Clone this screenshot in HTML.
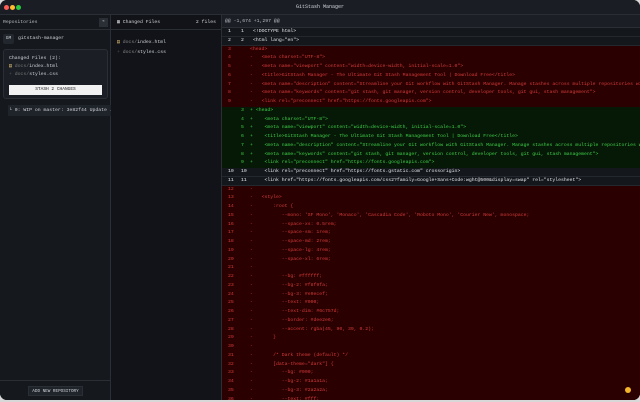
<!DOCTYPE html>
<html><head><meta charset="utf-8"><style>
*{margin:0;padding:0;box-sizing:border-box}
body{width:640px;height:402px;background:#d8d8d8;overflow:hidden;font-family:"Liberation Mono",monospace;}
.win{position:absolute;left:0;top:0;width:640px;height:400px;background:#0f1115;border-radius:7px;overflow:hidden;}
.title{position:absolute;left:0;top:0;width:640px;height:15px;background:#1a1d23;border-bottom:1px solid #2a2e35;color:#cfd3d8;font-size:5px;text-align:center;line-height:15px}
.dot{position:absolute;top:5px;width:5px;height:5px;border-radius:50%}
.side{position:absolute;left:0;top:15px;width:111px;height:385px;background:#15181d;border-right:1px solid #2a2e35;color:#cfd3d8;font-size:4.8px}
.mid{position:absolute;left:111px;top:15px;width:111px;height:385px;background:#111318;border-right:1px solid #2a2e35;color:#cfd3d8;font-size:4.8px}
.diff{position:absolute;left:222px;top:15px;width:418px;height:385px;background:#270000;font-size:4.8px}
.hh{height:13px;background:#1b1e24;color:#b8bcc2;line-height:13px;padding-left:3px;border-bottom:1px solid #2a2e35}
.r{height:8.75px;line-height:8.75px;white-space:pre;position:relative;overflow:hidden}
.r span{position:absolute;top:0}
.o{left:6px}.n{left:19px}.s{left:28px}.c{left:31px}
.ctx{background:#14171c;color:#e4e6ea;border-bottom:1px solid #23272e}
.del{background:#2a0000;color:#d83a3a}
.add{background:#061806;color:#3fd14a}
</style></head><body>
<div class="win">
<div class="title">GitStash Manager
<div class="dot" style="left:4px;background:#ff5f57"></div>
<div class="dot" style="left:10px;background:#febc2e"></div>
<div class="dot" style="left:16px;background:#28c840"></div>
</div>
<div class="side">
 <div style="height:15px;line-height:15px;padding-left:3px;border-bottom:1px solid #2a2e35;color:#b8bcc2">Repositories</div>
 <div style="position:absolute;left:99px;top:3px;width:9px;height:9px;background:#2a2e35;color:#ccc;font-size:4px;text-align:center;line-height:9px">«</div>
 <div style="position:absolute;left:3px;top:19px;width:11px;height:10px;background:#22262d;border-radius:2px;text-align:center;line-height:10px;font-size:4.5px">GM</div>
 <div style="position:absolute;left:18px;top:19px;line-height:10px">gitstash-manager</div>
 <div style="position:absolute;left:3px;top:34px;width:105px;height:50px;background:#1b1f25;border:1px solid #2a2e35;border-radius:3px">
  <div style="position:absolute;left:5px;top:6px">Changed Files (2):</div>
  <div style="position:absolute;left:5px;top:14px"><span style="color:#e0c070">▤</span> <span style="color:#777">docs/</span>index.html</div>
  <div style="position:absolute;left:5px;top:22px"><span style="color:#555">+</span> <span style="color:#777">docs/</span>styles.css</div>
  <div style="position:absolute;left:5px;top:35px;width:93px;height:10px;background:#f2f2f2;color:#222;text-align:center;line-height:10px;font-size:4.5px">STASH 2 CHANGES</div>
 </div>
 <div style="position:absolute;left:8px;top:90px;width:103px;height:11px;background:#1f232a;line-height:11px;padding-left:1px;color:#cfd3d8;white-space:nowrap;overflow:hidden">└ 0: WIP on master: 3e82f44 Update …</div>
 <div style="position:absolute;left:0;top:365px;width:111px;border-top:1px solid #2a2e35"></div>
 <div style="position:absolute;left:28px;top:371px;width:55px;height:10px;background:#1f232a;border:1px solid #2a2e35;text-align:center;line-height:9px;font-size:4.3px">ADD NEW REPOSITORY</div>
</div>
<div class="mid">
 <div style="height:15px;line-height:15px;padding-left:6px;border-bottom:1px solid #2a2e35">▦ Changed Files<span style="position:absolute;right:5px">2 files</span></div>
 <div style="position:absolute;left:6px;top:25px"><span style="color:#e0c070">▤</span> <span style="color:#888">docs/</span>index.html</div>
 <div style="position:absolute;left:6px;top:35px"><span style="color:#555">+</span> <span style="color:#888">docs/</span>styles.css</div>
</div>
<div class="diff">
<div class="hh">@@ -1,674 +1,297 @@</div>
<div class="r ctx"><span class="o">1</span><span class="n">1</span><span class="c">&lt;!DOCTYPE html&gt;</span></div>
<div class="r ctx"><span class="o">2</span><span class="n">2</span><span class="c">&lt;html lang="en"&gt;</span></div>
<div class="r del"><span class="o">3</span><span class="s">&lt;head&gt;</span></div>
<div class="r del"><span class="o">4</span><span class="s">-</span><span class="c">   &lt;meta charset="UTF-8"&gt;</span></div>
<div class="r del"><span class="o">5</span><span class="s">-</span><span class="c">   &lt;meta name="viewport" content="width=device-width, initial-scale=1.0"&gt;</span></div>
<div class="r del"><span class="o">6</span><span class="s">-</span><span class="c">   &lt;title&gt;GitStash Manager - The Ultimate Git Stash Management Tool | Download Free&lt;/title&gt;</span></div>
<div class="r del"><span class="o">7</span><span class="s">-</span><span class="c">   &lt;meta name="description" content="Streamline your Git workflow with GitStash Manager. Manage stashes across multiple repositories with an i…</span></div>
<div class="r del"><span class="o">8</span><span class="s">-</span><span class="c">   &lt;meta name="keywords" content="git stash, git manager, version control, developer tools, git gui, stash management"&gt;</span></div>
<div class="r del"><span class="o">9</span><span class="s">-</span><span class="c">   &lt;link rel="preconnect" href="https://fonts.googleapis.com"&gt;</span></div>
<div class="r add"><span class="n">3</span><span class="s">+</span><span class="c"> &lt;head&gt;</span></div>
<div class="r add"><span class="n">4</span><span class="s">+</span><span class="c">    &lt;meta charset="UTF-8"&gt;</span></div>
<div class="r add"><span class="n">5</span><span class="s">+</span><span class="c">    &lt;meta name="viewport" content="width=device-width, initial-scale=1.0"&gt;</span></div>
<div class="r add"><span class="n">6</span><span class="s">+</span><span class="c">    &lt;title&gt;GitStash Manager - The Ultimate Git Stash Management Tool | Download Free&lt;/title&gt;</span></div>
<div class="r add"><span class="n">7</span><span class="s">+</span><span class="c">    &lt;meta name="description" content="Streamline your Git workflow with GitStash Manager. Manage stashes across multiple repositories with an …</span></div>
<div class="r add"><span class="n">8</span><span class="s">+</span><span class="c">    &lt;meta name="keywords" content="git stash, git manager, version control, developer tools, git gui, stash management"&gt;</span></div>
<div class="r add"><span class="n">9</span><span class="s">+</span><span class="c">    &lt;link rel="preconnect" href="https://fonts.googleapis.com"&gt;</span></div>
<div class="r ctx"><span class="o">10</span><span class="n">10</span><span class="c">    &lt;link rel="preconnect" href="https://fonts.gstatic.com" crossorigin&gt;</span></div>
<div class="r ctx"><span class="o">11</span><span class="n">11</span><span class="c">    &lt;link href="https://fonts.googleapis.com/css2?family=Google+Sans+Code:wght@500&amp;display=swap" rel="stylesheet"&gt;</span></div>
<div class="r del"><span class="o">12</span><span class="s">-</span></div>
<div class="r del"><span class="o">13</span><span class="s">-</span><span class="c">   &lt;style&gt;</span></div>
<div class="r del"><span class="o">14</span><span class="s">-</span><span class="c">       :root {</span></div>
<div class="r del"><span class="o">15</span><span class="s">-</span><span class="c">          --mono: 'SF Mono', 'Monaco', 'Cascadia Code', 'Roboto Mono', 'Courier New', monospace;</span></div>
<div class="r del"><span class="o">16</span><span class="s">-</span><span class="c">          --space-xs: 0.5rem;</span></div>
<div class="r del"><span class="o">17</span><span class="s">-</span><span class="c">          --space-sm: 1rem;</span></div>
<div class="r del"><span class="o">18</span><span class="s">-</span><span class="c">          --space-md: 2rem;</span></div>
<div class="r del"><span class="o">19</span><span class="s">-</span><span class="c">          --space-lg: 4rem;</span></div>
<div class="r del"><span class="o">20</span><span class="s">-</span><span class="c">          --space-xl: 6rem;</span></div>
<div class="r del"><span class="o">21</span><span class="s">-</span></div>
<div class="r del"><span class="o">22</span><span class="s">-</span><span class="c">          --bg: #ffffff;</span></div>
<div class="r del"><span class="o">23</span><span class="s">-</span><span class="c">          --bg-2: #f8f9fa;</span></div>
<div class="r del"><span class="o">24</span><span class="s">-</span><span class="c">          --bg-3: #e9ecef;</span></div>
<div class="r del"><span class="o">25</span><span class="s">-</span><span class="c">          --text: #000;</span></div>
<div class="r del"><span class="o">26</span><span class="s">-</span><span class="c">          --text-dim: #6c757d;</span></div>
<div class="r del"><span class="o">27</span><span class="s">-</span><span class="c">          --border: #dee2e6;</span></div>
<div class="r del"><span class="o">28</span><span class="s">-</span><span class="c">          --accent: rgba(45, 90, 39, 0.2);</span></div>
<div class="r del"><span class="o">29</span><span class="s">-</span><span class="c">       }</span></div>
<div class="r del"><span class="o">30</span><span class="s">-</span></div>
<div class="r del"><span class="o">31</span><span class="s">-</span><span class="c">       /* Dark theme (default) */</span></div>
<div class="r del"><span class="o">32</span><span class="s">-</span><span class="c">       [data-theme="dark"] {</span></div>
<div class="r del"><span class="o">33</span><span class="s">-</span><span class="c">          --bg: #000;</span></div>
<div class="r del"><span class="o">34</span><span class="s">-</span><span class="c">          --bg-2: #1a1a1a;</span></div>
<div class="r del"><span class="o">35</span><span class="s">-</span><span class="c">          --bg-3: #2a2a2a;</span></div>
<div class="r del"><span class="o">36</span><span class="s">-</span><span class="c">          --text: #fff;</span></div>
</div>
<div style="position:absolute;left:625px;top:387px;width:6px;height:6px;border-radius:50%;background:#f5b52a"></div>
</div>
</body></html>
